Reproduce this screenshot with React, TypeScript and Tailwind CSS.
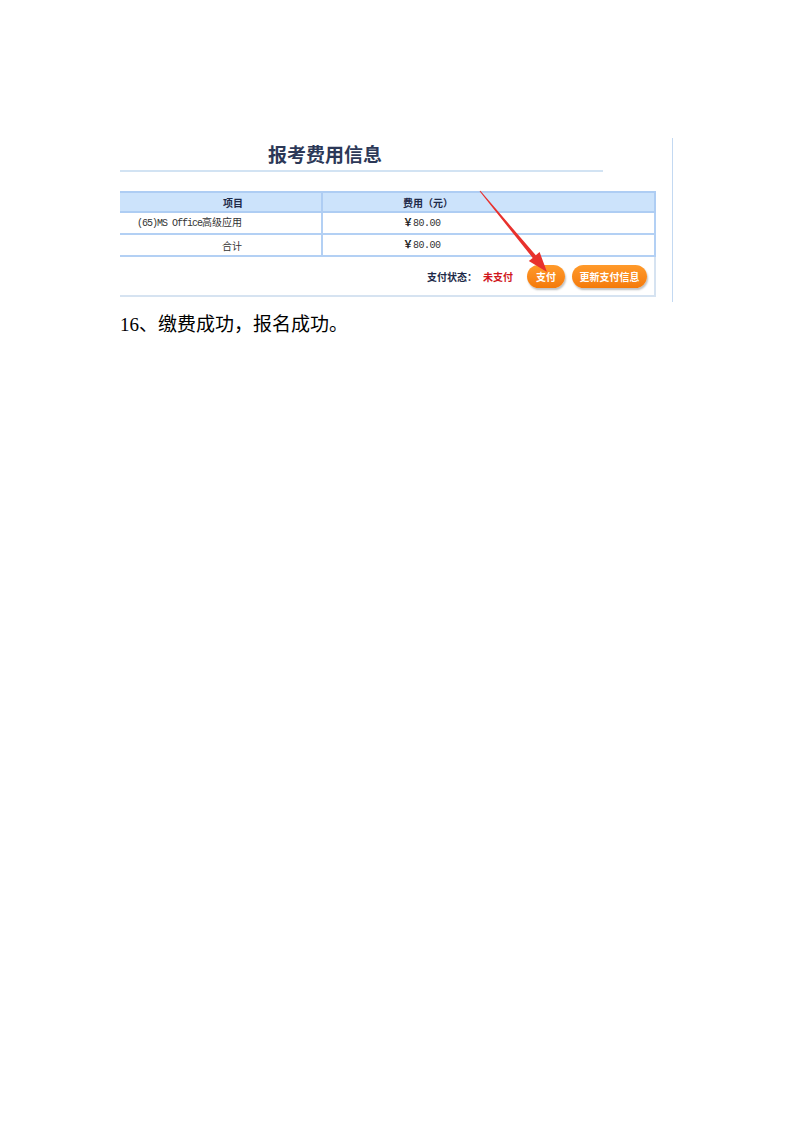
import React from "react";

const cjk = { fontFamily: '"Noto Sans CJK SC", sans-serif' };

export default function App() {
  return (
    <div className="w-[793px] h-[1122px] bg-white pt-[138px] pl-[120px]" style={cjk}>
      <div className="relative w-[553px] h-[164px] border-r border-[#c3d9f2]">
        <div className="w-[483px] h-[34px] border-b-2 border-[#d2e3f3] pl-[148px] pt-[8px]">
          <div
            className="text-[19px] leading-[19px] font-bold text-[#2c3857]"
            style={{ fontFamily: '"Liberation Serif", "Noto Sans CJK SC", serif' }}
          >
            报考费用信息
          </div>
        </div>

        <div className="mt-[19px] w-[536px] text-[10px]">
          <div className="flex h-[22px] bg-[#cce3fb] border-t-2 border-b-2 border-r-2 border-[#aecdf3] font-bold text-[#1e2a48]">
            <div className="w-[203px] h-full border-r-2 border-[#aecdf3] flex items-center justify-end pr-[78px]">项目</div>
            <div className="flex-1 flex items-center pl-[80px]">费用（元）</div>
          </div>
          <div className="flex h-[22px] border-b-2 border-r-2 border-[#b3d0f4] text-[#333]">
            <div className="w-[203px] h-full border-r-2 border-[#b3d0f4] flex items-center justify-end pr-[79px]">
              <span className="leading-[14px]">
                <span className="tracking-[-1px]" style={{ fontFamily: '"Liberation Mono", monospace' }}>(65)MS Office</span>
                高级应用
              </span>
            </div>
            <div className="flex-1 flex items-center pl-[80px]">
              <span className="leading-[14px]">
                <span className="font-bold text-[#222]">￥</span>
                <span className="tracking-[-0.5px]" style={{ fontFamily: '"Liberation Mono", monospace' }}>80.00</span>
              </span>
            </div>
          </div>
          <div className="flex h-[22px] border-b-2 border-r-2 border-[#b3d0f4] text-[#333]">
            <div className="w-[203px] h-full border-r-2 border-[#b3d0f4] flex items-center justify-end pr-[79px]">合计</div>
            <div className="flex-1 flex items-center pl-[80px]">
              <span className="leading-[14px]">
                <span className="font-bold text-[#222]">￥</span>
                <span className="tracking-[-0.5px]" style={{ fontFamily: '"Liberation Mono", monospace' }}>80.00</span>
              </span>
            </div>
          </div>
          <div className="flex items-center h-[40px] border-b-2 border-r-2 border-[#d6e3f1] font-bold">
            <span className="ml-[307px] text-[#1e2a48]">支付状态：</span>
            <span className="ml-[6px] text-[#d0161c]">未支付</span>
            <div className="ml-[14px] w-[38px] h-[23px] rounded-full bg-gradient-to-b from-[#ff9a2a] to-[#f47a08] shadow-[1px_2px_2px_rgba(0,0,0,0.25)] flex items-center justify-center text-white">
              支付
            </div>
            <div className="ml-[7px] w-[75px] h-[23px] rounded-full bg-gradient-to-b from-[#ff9a2a] to-[#f47a08] shadow-[1px_2px_2px_rgba(0,0,0,0.25)] flex items-center justify-center text-white">
              更新支付信息
            </div>
          </div>
        </div>

        <svg className="absolute left-0 top-0" width="553" height="164" viewBox="0 0 553 164">
          <polygon
            points="359.6,53.3 412.7,119.9 408.8,123.1 427,134 419.6,114.1 415.8,117.3 360.4,52.7"
            fill="#e8312d"
          />
        </svg>
      </div>

      <p
        className="mt-[11px] text-[19px] leading-[24px] text-black"
        style={{ fontFamily: '"Liberation Serif", "Noto Sans CJK SC", serif' }}
      >
        16、缴费成功，报名成功。
      </p>
    </div>
  );
}
